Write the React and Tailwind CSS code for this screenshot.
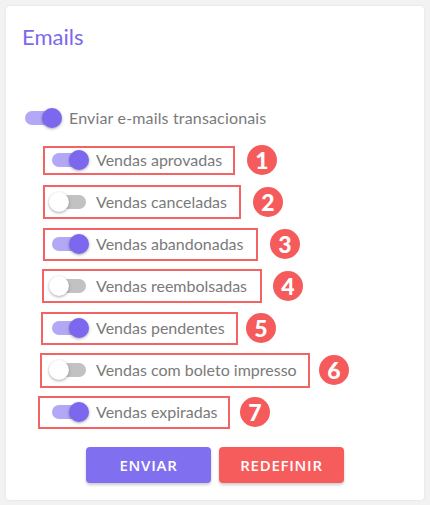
const rows = [
  { n: 1, label: 'Vendas aprovadas', on: true, box: 'ml-[21px] w-[192px] h-[29px] pl-[4px]', badge: 'ml-[12px]' },
  { n: 2, label: 'Vendas canceladas', on: false, box: 'ml-[21px] w-[198px] h-[34px] pl-[4px]', badge: 'ml-[12px]' },
  { n: 3, label: 'Vendas abandonadas', on: true, box: 'ml-[21px] w-[215px] h-[33px] pl-[4px]', badge: 'ml-[12px]' },
  { n: 4, label: 'Vendas reembolsadas', on: false, box: 'ml-[20px] w-[220px] h-[34px] pl-[5px]', badge: 'ml-[11px]' },
  { n: 5, label: 'Vendas pendentes', on: true, box: 'ml-[19px] w-[197px] h-[33px] pl-[6px]', badge: 'ml-[8px]' },
  { n: 6, label: 'Vendas com boleto impresso', on: false, box: 'ml-[18px] w-[270px] h-[35px] pl-[7px]', badge: 'ml-[9px]' },
  { n: 7, label: 'Vendas expiradas', on: true, box: 'ml-[16px] w-[192px] h-[33px] pl-[9px]', badge: 'ml-[10px]' },
];

function Toggle({ on }) {
  return (
    <div className="relative w-[40px] h-[20px] shrink-0">
      <div className={`absolute left-[3px] top-[3px] w-[34px] h-[14px] rounded-full ${on ? 'bg-[#b3a8f5]' : 'bg-[#c2c2c2]'}`} />
      <div
        className={`absolute top-0 w-[20px] h-[20px] rounded-full shadow-[0_1px_3px_rgba(0,0,0,0.35)] ${on ? 'left-[20px] bg-[#7b68ee]' : 'left-0 bg-white'}`}
      />
    </div>
  );
}

export default function App() {
  return (
    <div className="min-h-screen bg-[#f2f2f2] p-[6px]" style={{ fontFamily: 'Lato, "Open Sans", sans-serif' }}>
      <div className="w-[418px] h-[494px] bg-white rounded-[4px] shadow-[0_0_3px_rgba(0,0,0,0.08)] pl-[16px] pt-[17px]">
        <h1 className="text-[22px] leading-[28px] text-[#7b68ee]">Emails</h1>

        <div className="mt-[46px]">
          <div className="flex items-center h-[42px]">
            <Toggle on />
            <span className="ml-[7px] text-[16px] tracking-[0.01em] text-[#7a7a7a]">Enviar e-mails transacionais</span>
          </div>

          {rows.map((r) => (
            <div key={r.n} className="flex items-center h-[42px]">
              <div className={`flex items-center shrink-0 border-2 border-[#f26464] ${r.box}`}>
                <Toggle on={r.on} />
                <span className="ml-[7px] text-[16px] text-[#7a7a7a] whitespace-nowrap">{r.label}</span>
              </div>
              <div className={`w-[30px] h-[30px] shrink-0 rounded-full bg-[#f55b5b] flex items-center justify-center text-white text-[23px] font-black leading-none ${r.badge}`}>
                {r.n}
              </div>
            </div>
          ))}
        </div>

        <div className="mt-[14px] flex justify-center gap-[8px] pr-[16px]" style={{ fontFamily: '"Open Sans", Lato, sans-serif' }}>
          <button className="w-[125px] h-[36px] rounded-[4px] bg-[#8070ef] text-white text-[15px] font-semibold tracking-[0.05em] shadow-[0_2px_3px_rgba(0,0,0,0.2)]">
            ENVIAR
          </button>
          <button className="w-[125px] h-[36px] rounded-[4px] bg-[#f75c5c] text-white text-[15px] font-semibold tracking-[0.05em] shadow-[0_2px_3px_rgba(0,0,0,0.2)]">
            REDEFINIR
          </button>
        </div>
      </div>
    </div>
  );
}
